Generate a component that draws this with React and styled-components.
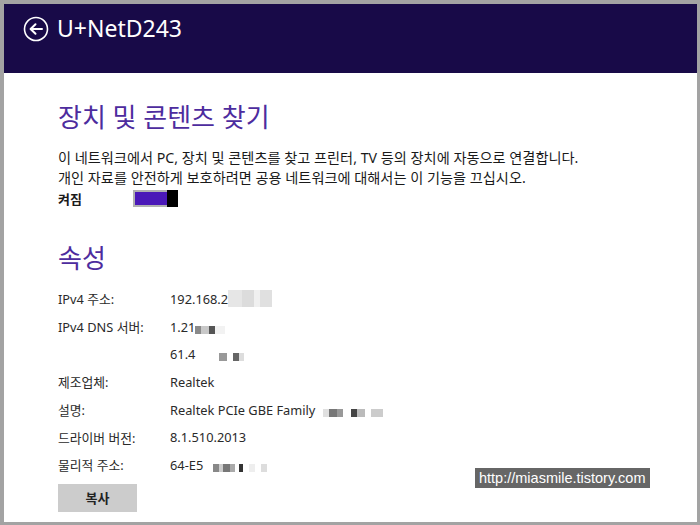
import React from 'react';
import styled, { createGlobalStyle } from 'styled-components';

const GlobalStyle = createGlobalStyle`
  html, body {
    margin: 0;
    padding: 0;
    background: #fff;
  }
  body {
    font-family: "Noto Sans", "Noto Sans CJK KR", sans-serif;
  }
`;

const Font = {
  kr: '"Noto Sans", "Noto Sans CJK KR", sans-serif',
};

const props = [
  { label: 'IPv4 주소:', value: '192.168.2', mosaic: [['#e6e6e6', 14], ['#dcdcdc', 12], ['#f0f0f0', 6], ['#e0e0e0', 12]] },
  { label: 'IPv4 DNS 서버:', value: '1.21', mosaic: [['#8a8a8a', 6], ['#c8c8c8', 8], ['#555', 6], ['#f2f2f2', 10]], small: true },
  { label: '', value: '61.4', gap: 24, mosaic: [['#999', 8], ['#fff', 6], ['#666', 6], ['#ddd', 5]], small: true },
  { label: '제조업체:', value: 'Realtek' },
  { label: '설명:', value: 'Realtek PCIe GBE Family', gap: 8, mosaic: [['#e0e0e0', 6], ['#777', 8], ['#999', 6], ['#fff', 8], ['#444', 6], ['#bbb', 8], ['#fff', 6], ['#ccc', 12]], small: true },
  { label: '드라이버 버전:', value: '8.1.510.2013' },
  { label: '물리적 주소:', value: '64-E5', gap: 10, mosaic: [['#888', 6], ['#ccc', 4], ['#777', 7], ['#aaa', 5], ['#fff', 4], ['#333', 4], ['#fff', 6], ['#eee', 6], ['#fff', 6], ['#ddd', 6]], small: true },
];

const BackIcon = () => (
  <svg width="26" height="26" viewBox="0 0 26 26">
    <circle cx="13" cy="13" r="11.5" fill="none" stroke="#fff" strokeWidth="1.6" />
    <path d="M19 13H8M12.5 8.2L7.6 13l4.9 4.8" fill="none" stroke="#fff" strokeWidth="2" strokeLinecap="round" strokeLinejoin="round" />
  </svg>
);

const App = () => {
  return (
    <>
      <GlobalStyle />
      <Frame>
        <Header>
          <BackIcon />
          <HeaderTitle>U+NetD243</HeaderTitle>
        </Header>
        <Content>
          <SectionTitle>장치 및 콘텐츠 찾기</SectionTitle>
          <Description>
            이 네트워크에서 PC, 장치 및 콘텐츠를 찾고 프린터, TV 등의 장치에 자동으로 연결합니다.
            <br />
            개인 자료를 안전하게 보호하려면 공용 네트워크에 대해서는 이 기능을 끄십시오.
          </Description>
          <ToggleRow>
            <ToggleLabel>켜짐</ToggleLabel>
            <Toggle>
              <ToggleFill />
              <ToggleThumb />
            </Toggle>
          </ToggleRow>
          <SectionTitle second>속성</SectionTitle>
          <PropList>
            {props.map((p, i) => (
              <PropRow key={i}>
                <PropLabel>{p.label}</PropLabel>
                <PropValue>
                  {p.value}
                  {p.mosaic && (
                    <Mosaic gap={p.gap || 0} small={p.small}>
                      {p.mosaic.map(([c, w], j) => (
                        <Cell key={j} style={{ background: c, width: w }} />
                      ))}
                    </Mosaic>
                  )}
                </PropValue>
              </PropRow>
            ))}
          </PropList>
          <CopyButton>복사</CopyButton>
        </Content>
        <Watermark>http://miasmile.tistory.com</Watermark>
      </Frame>
    </>
  );
};

const Frame = styled.div`
  position: relative;
  box-sizing: border-box;
  width: 700px;
  height: 525px;
  border: 4px solid #a3a3a3;
  border-right-width: 3px;
  border-bottom-width: 3px;
  background: #fff;
  overflow: hidden;
  display: flex;
  flex-direction: column;
`;

const Header = styled.div`
  height: 69px;
  background: #180a48;
  display: flex;
  align-items: flex-start;
  padding: 12px 0 0 19px;
  box-sizing: border-box;
  gap: 8px;
`;

const HeaderTitle = styled.div`
  color: #fff;
  font-family: ${Font.kr};
  font-size: 23px;
  line-height: 26px;
  margin-top: -1px;
`;

const Content = styled.div`
  padding: 0 0 0 54px;
  display: flex;
  flex-direction: column;
  align-items: flex-start;
`;

const SectionTitle = styled.h1`
  margin: ${p => (p.second ? '32px' : '26px')} 0 0 0;
  font-family: ${Font.kr};
  font-weight: 400;
  font-size: 26px;
  line-height: 36px;
  color: #4d2c9e;
`;

const Description = styled.div`
  margin-top: 13px;
  font-family: ${Font.kr};
  font-size: 14.2px;
  line-height: 20px;
  color: #1a1a1a;
`;

const ToggleRow = styled.div`
  display: flex;
  align-items: center;
  height: 20px;
`;

const ToggleLabel = styled.div`
  width: 75px;
  font-family: ${Font.kr};
  font-weight: 700;
  font-size: 13px;
  color: #1a1a1a;
`;

const Toggle = styled.div`
  display: flex;
  width: 45px;
  height: 17px;
`;

const ToggleFill = styled.div`
  flex: 1;
  background: #4a18b8;
  border: 2px solid #b0b0b0;
  border-right: none;
`;

const ToggleThumb = styled.div`
  width: 11px;
  background: #000;
`;

const PropList = styled.div`
  margin-top: 9px;
  display: flex;
  flex-direction: column;
`;

const PropRow = styled.div`
  display: flex;
  align-items: center;
  height: 27.7px;
  font-family: ${Font.kr};
  font-size: 12.8px;
  color: #2a2a2a;
`;

const PropLabel = styled.div`
  width: 112px;
`;

const PropValue = styled.div`
  display: flex;
  align-items: center;
`;

const Mosaic = styled.span`
  display: inline-flex;
  margin-left: ${p => p.gap}px;
  height: ${p => (p.small ? '8px' : '17px')};
  margin-top: ${p => (p.small ? '6px' : '0')};
`;

const Cell = styled.span`
  display: block;
  height: 100%;
`;

const CopyButton = styled.button`
  margin-top: 5px;
  width: 79px;
  height: 28px;
  border: none;
  background: #cccccc;
  font-family: ${Font.kr};
  font-weight: 700;
  font-size: 13px;
  color: #222;
  padding: 0;
`;

const Watermark = styled.div`
  position: absolute;
  left: 471px;
  top: 464px;
  padding: 1px 4px;
  background: #666;
  color: #fff;
  font-family: "Liberation Sans", Arial, sans-serif;
  font-size: 14.5px;
  line-height: 18px;
`;

export default App;
